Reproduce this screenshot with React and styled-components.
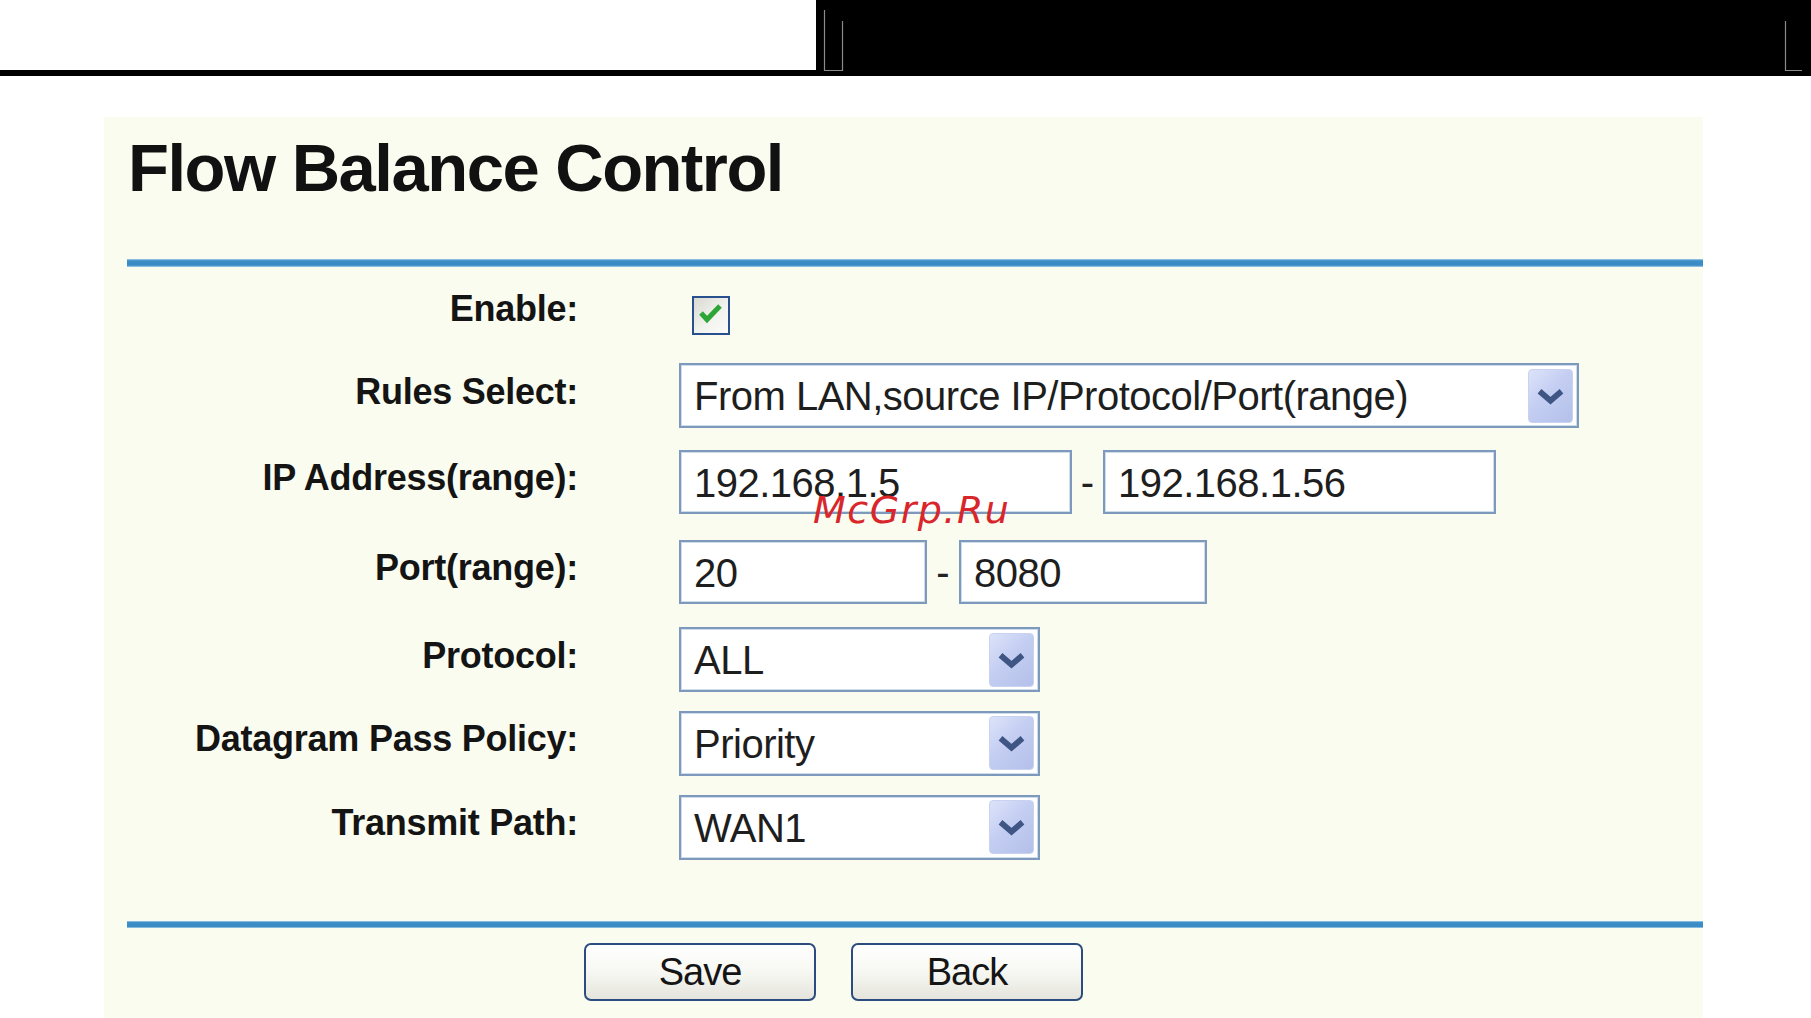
import React from "react";
import styled, { createGlobalStyle } from "styled-components";

const GlobalStyle = createGlobalStyle`
  html, body { margin: 0; padding: 0; background: #ffffff; }
  body { font-family: "Liberation Sans", Arial, sans-serif; color: #111; }
  * { box-sizing: border-box; }
`;

const Header = styled.header`
  display: flex;
  height: 76px;
  background: #000;
`;

const WhiteBlock = styled.div`
  width: 816px;
  height: 70px;
  background: #fff;
`;

const DarkArea = styled.div`
  flex: 1;
  display: flex;
`;

const Main = styled.main`
  padding-top: 41px;
`;

const Panel = styled.section`
  position: relative;
  margin-left: 104px;
  width: 1599px;
  min-height: 901px;
  background: #fafcf0;
  padding-top: 17px;
  overflow: hidden;
`;

const Title = styled.h1`
  margin: 0 0 0 24px;
  font-family: "Liberation Sans", Arial, sans-serif;
  font-weight: 700;
  font-size: 67px;
  line-height: 67px;
  letter-spacing: -1.5px;
  color: #111;
`;

const Divider = styled.div`
  margin-top: ${(p) => p.$mt}px;
  margin-left: 23px;
  height: ${(p) => p.$h}px;
  background: linear-gradient(
    to bottom,
    #a8d0ec 0%,
    #3c8ec7 22%,
    #3a8bc4 78%,
    #a8d0ec 100%
  );
`;

const Row = styled.div`
  display: grid;
  grid-template-columns: 474px auto;
  grid-template-rows: ${(p) => p.$h}px;
  column-gap: 101px;
  align-items: center;
  margin-top: ${(p) => p.$mt}px;
  height: ${(p) => p.$h}px;
`;

const Label = styled.div`
  text-align: right;
  font-weight: 700;
  font-size: 36px;
  line-height: 24px;
  letter-spacing: -0.25px;
  color: #141414;
  padding-bottom: ${(p) => p.$lift || 8}px;
  white-space: nowrap;
`;

const Controls = styled.div`
  display: flex;
  align-items: center;
  height: 100%;
`;

const CheckBox = styled.div`
  margin-left: 13px;
  width: 38px;
  height: 39px;
  border: 2px solid #284f8e;
  background: linear-gradient(135deg, #d9d9d3 0%, #f2f2ee 55%, #fbfbf9 100%);
  display: flex;
`;

const TextBox = styled.input`
  width: ${(p) => p.$w}px;
  height: 64px;
  border: 2px solid #7d9abd;
  box-shadow: inset 0 0 0 1px #cfdcec;
  background: #fff;
  padding: 2px 0 0 13px;
  margin: 0;
  font-family: "Liberation Sans", Arial, sans-serif;
  font-size: 40px;
  letter-spacing: -0.5px;
  color: #1e1e1e;
  outline: none;
`;

const Dash = styled.span`
  width: ${(p) => p.$w}px;
  text-align: center;
  font-size: 40px;
  color: #222;
`;

const SelectBox = styled.div`
  width: ${(p) => p.$w}px;
  height: 65px;
  display: flex;
  align-items: center;
  justify-content: space-between;
  border: 2px solid #7d9abd;
  box-shadow: inset 0 0 0 1px #cfdcec;
  background: #fff;
  padding: 0 4px 0 13px;
`;

const SelectText = styled.span`
  font-size: 40px;
  letter-spacing: -0.5px;
  color: #1e1e1e;
  padding-top: 2px;
  white-space: nowrap;
`;

const ArrowButton = styled.span`
  width: 45px;
  height: 54px;
  border-radius: 4px;
  border: 1px solid #c9d2f0;
  background: linear-gradient(135deg, #dce3f9 0%, #c4cef2 45%, #b4c0ea 100%);
  display: flex;
  align-items: center;
  justify-content: center;
`;

const ButtonRow = styled.div`
  display: flex;
  gap: 35px;
  margin-top: 15px;
  margin-left: 480px;
`;

const Button = styled.button`
  width: 232px;
  height: 58px;
  border: 2px solid #2c4b7f;
  border-radius: 7px;
  background: linear-gradient(to bottom, #ffffff 0%, #f6f6f1 55%, #e4e4dc 100%);
  font-family: "Liberation Sans", Arial, sans-serif;
  font-size: 38px;
  letter-spacing: -1px;
  color: #151515;
  padding: 0;
  cursor: pointer;
`;

const Watermark = styled.div`
  position: absolute;
  left: 709px;
  top: 374px;
  font-family: "DejaVu Sans", Verdana, sans-serif;
  font-style: oblique;
  font-size: 38px;
  line-height: 38px;
  letter-spacing: 1.5px;
  color: #d8262b;
  pointer-events: none;
`;

const CropMarks = () => (
  <svg width="995" height="76" viewBox="0 0 995 76" aria-hidden="true">
    <g stroke="#8a8a8a" strokeWidth="1.2" fill="none">
      <polyline points="8.5,10 8.5,70.5 26.5,70.5 26.5,21" />
      <polyline points="969.5,21 969.5,70.5 986,70.5" />
    </g>
  </svg>
);

const Chevron = () => (
  <svg width="45" height="54" viewBox="0 0 45 54" aria-hidden="true">
    <polyline
      points="11,22 22.5,32 34,22"
      fill="none"
      stroke="#3f5583"
      strokeWidth="6"
      strokeLinejoin="miter"
    />
  </svg>
);

const Check = () => (
  <svg width="34" height="35" viewBox="0 0 34 35" aria-hidden="true">
    <polyline
      points="7,15 13,21.5 26,8"
      fill="none"
      stroke="#2ea537"
      strokeWidth="5"
      strokeLinejoin="miter"
    />
  </svg>
);

const Select = ({ width, value }) => (
  <SelectBox $w={width}>
    <SelectText>{value}</SelectText>
    <ArrowButton>
      <Chevron />
    </ArrowButton>
  </SelectBox>
);

export default function App() {
  return (
    <>
      <GlobalStyle />
      <Header>
        <WhiteBlock />
        <DarkArea>
          <CropMarks />
        </DarkArea>
      </Header>
      <Main>
        <Panel>
          <Title>Flow Balance Control</Title>
          <Divider $mt={58} $h={8} />

          <Row $mt={29} $h={39}>
            <Label $lift={13}>Enable:</Label>
            <Controls>
              <CheckBox>
                <Check />
              </CheckBox>
            </Controls>
          </Row>

          <Row $mt={28} $h={65}>
            <Label>Rules Select:</Label>
            <Controls>
              <Select width={900} value="From LAN,source IP/Protocol/Port(range)" />
            </Controls>
          </Row>

          <Row $mt={22} $h={64}>
            <Label>IP Address(range):</Label>
            <Controls>
              <TextBox $w={393} readOnly defaultValue="192.168.1.5" />
              <Dash $w={31}>-</Dash>
              <TextBox $w={393} readOnly defaultValue="192.168.1.56" />
            </Controls>
          </Row>

          <Row $mt={26} $h={64}>
            <Label>Port(range):</Label>
            <Controls>
              <TextBox $w={248} readOnly defaultValue="20" />
              <Dash $w={32}>-</Dash>
              <TextBox $w={248} readOnly defaultValue="8080" />
            </Controls>
          </Row>

          <Row $mt={23} $h={65}>
            <Label>Protocol:</Label>
            <Controls>
              <Select width={361} value="ALL" />
            </Controls>
          </Row>

          <Row $mt={19} $h={64}>
            <Label>Datagram Pass Policy:</Label>
            <Controls>
              <Select width={361} value="Priority" />
            </Controls>
          </Row>

          <Row $mt={20} $h={64}>
            <Label>Transmit Path:</Label>
            <Controls>
              <Select width={361} value="WAN1" />
            </Controls>
          </Row>

          <Divider $mt={62} $h={7} />

          <ButtonRow>
            <Button type="button">Save</Button>
            <Button type="button">Back</Button>
          </ButtonRow>

          <Watermark>McGrp.Ru</Watermark>
        </Panel>
      </Main>
    </>
  );
}
